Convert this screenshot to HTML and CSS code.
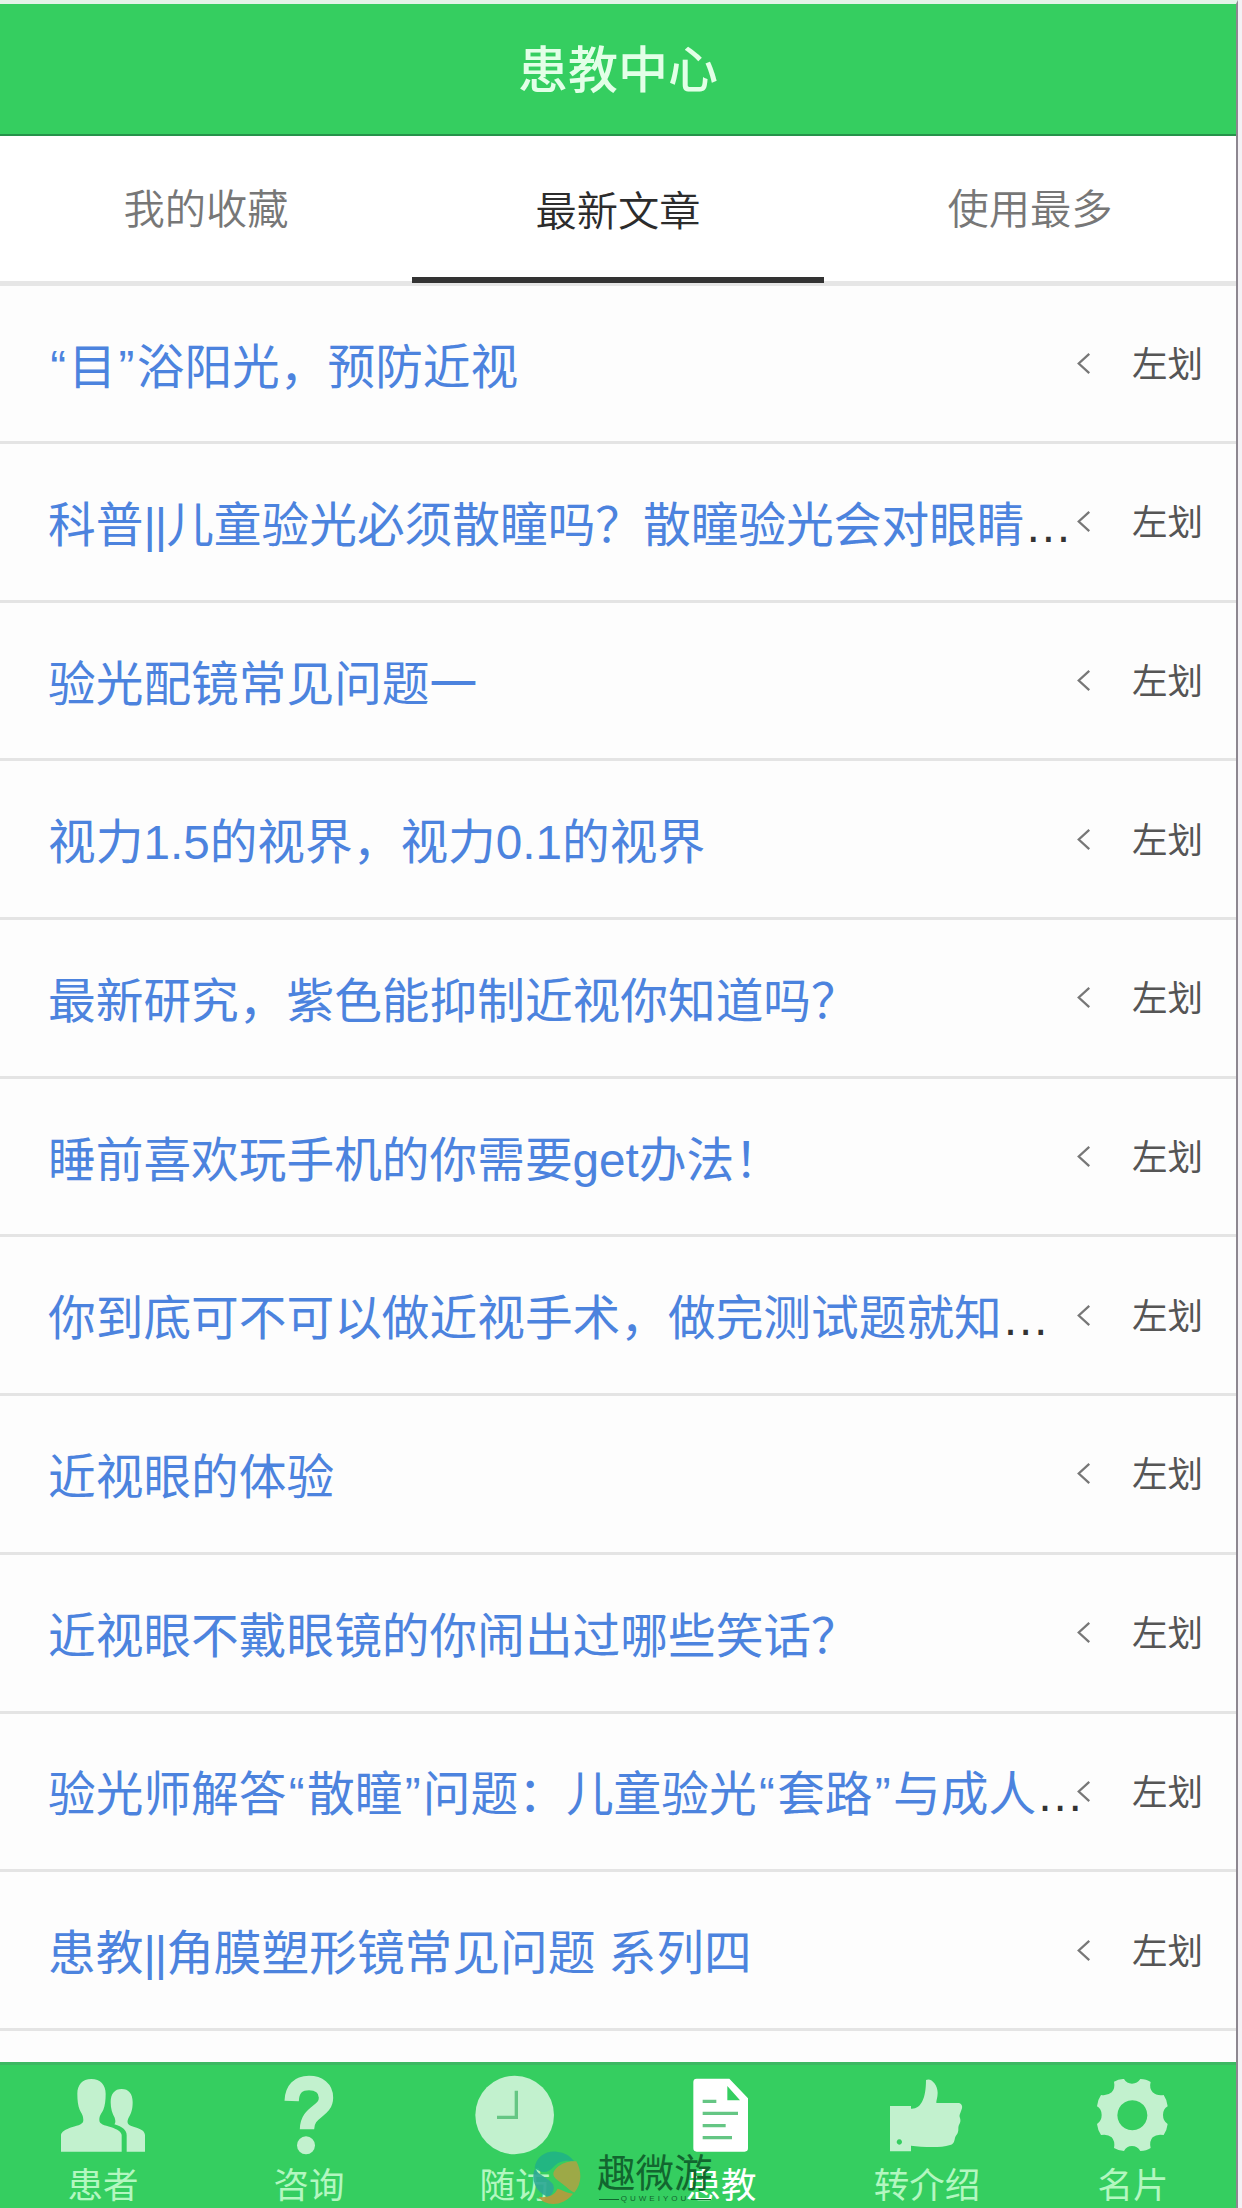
FILE: index.html
```html
<!DOCTYPE html>
<html lang="zh-CN">
<head>
<meta charset="utf-8">
<title>患教中心</title>
<link rel="stylesheet" href="styles.css">
</head>
<body>
<div class="app">
  <header class="header"><h1 class="title">患教中心</h1></header>
  <nav class="tabs">
    <a class="tab">我的收藏</a>
    <a class="tab tab-active">最新文章</a>
    <a class="tab">使用最多</a>
  </nav>
  <ul class="list">
    <li class="row"><span class="name"><span class="q">“</span>目<span class="q">”</span>浴阳光，预防近视</span><svg class="chev" viewBox="0 0 16 24"><path d="M14 1L2 12l12 11"/></svg><span class="hint">左划</span></li>
    <li class="row"><span class="name">科普<span class="bars">||</span>儿童验光必须散瞳吗？散瞳验光会对眼睛<span class="more">…</span></span><svg class="chev" viewBox="0 0 16 24"><path d="M14 1L2 12l12 11"/></svg><span class="hint">左划</span></li>
    <li class="row"><span class="name">验光配镜常见问题一</span><svg class="chev" viewBox="0 0 16 24"><path d="M14 1L2 12l12 11"/></svg><span class="hint">左划</span></li>
    <li class="row"><span class="name">视力1.5的视界，视力0.1的视界</span><svg class="chev" viewBox="0 0 16 24"><path d="M14 1L2 12l12 11"/></svg><span class="hint">左划</span></li>
    <li class="row"><span class="name">最新研究，紫色能抑制近视你知道吗？</span><svg class="chev" viewBox="0 0 16 24"><path d="M14 1L2 12l12 11"/></svg><span class="hint">左划</span></li>
    <li class="row"><span class="name">睡前喜欢玩手机的你需要get办法！</span><svg class="chev" viewBox="0 0 16 24"><path d="M14 1L2 12l12 11"/></svg><span class="hint">左划</span></li>
    <li class="row"><span class="name">你到底可不可以做近视手术，做完测试题就知<span class="more">…</span></span><svg class="chev" viewBox="0 0 16 24"><path d="M14 1L2 12l12 11"/></svg><span class="hint">左划</span></li>
    <li class="row"><span class="name">近视眼的体验</span><svg class="chev" viewBox="0 0 16 24"><path d="M14 1L2 12l12 11"/></svg><span class="hint">左划</span></li>
    <li class="row"><span class="name">近视眼不戴眼镜的你闹出过哪些笑话？</span><svg class="chev" viewBox="0 0 16 24"><path d="M14 1L2 12l12 11"/></svg><span class="hint">左划</span></li>
    <li class="row"><span class="name">验光师解答<span class="q">“</span>散瞳<span class="q">”</span>问题：儿童验光<span class="q">“</span>套路<span class="q">”</span>与成人<span class="more">…</span></span><svg class="chev" viewBox="0 0 16 24"><path d="M14 1L2 12l12 11"/></svg><span class="hint">左划</span></li>
    <li class="row"><span class="name">患教<span class="bars">||</span>角膜塑形镜常见问题 系列四</span><svg class="chev" viewBox="0 0 16 24"><path d="M14 1L2 12l12 11"/></svg><span class="hint">左划</span></li>
  </ul>
  <footer class="bar">
    <a class="item">
      <svg class="icon" viewBox="174 105 270 246"><path d="M183 335v-49c0-10 14-18 32-24 22-7 35-9 35-22 0-14-5-19-11-31-5-12-7-28-7-48 0-26 15-44 42-44s43 18 43 44c0 20-2 36-7 48-6 12-12 17-12 31 0 13 14 15 36 22 18 6 31 14 31 24v49z"/><path d="M380 335v-49c0-16-12-25-37-33 4-4 4-10 1-20-7-11-12-27-12-46 0-26 12-40 33-40s33 14 33 40c0 22-5 34-11 44-4 8-5 12-4 17 2 8 14 11 27 15 16 5 25 12 25 23v49z"/></svg>
      <span>患者</span>
    </a>
    <a class="item">
      <svg class="icon" viewBox="792 105 270 246"><path class="mark" d="M875 183c1-36 20-54 52-54 30 0 51 16 51 44 0 44-57 39-57 95"/><circle cx="918" cy="316" r="27"/></svg>
      <span>咨询</span>
    </a>
    <a class="item">
      <svg class="icon" viewBox="151 105 270 246"><circle cx="285" cy="225" r="118"/><path class="cut" d="M290 152v80h-58"/></svg>
      <span>随访</span>
    </a>
    <a class="item item-active">
      <svg class="icon" viewBox="770 105 270 246"><path fill-rule="evenodd" d="M832 116h98l56 59v150q0 10-10 10H832q-10 0-10-10V126q0-10 10-10zM924 138v43h38z"/><path class="cut" d="M850 184h41M850 220h106M850 257h69M850 293h88"/></svg>
      <span>患教</span>
    </a>
    <a class="item">
      <svg class="icon" viewBox="183 105 270 246"><path fill-rule="evenodd" d="M207 198h63v8c30 2 45-31 45-86 15-8 35 14 35 38 0 15-5 25-4 31h65c10 0 14 8 12 16l-5 14c-3 7-3 10-1 15 3 8 1 14-4 23-2 6 0 12-2 19-2 8-7 11-9 17-2 12-5 20-15 22-30 10-85 6-117 2v17h-63zM235 298a8 8 0 1 0 .1 0z"/></svg>
      <span>转介绍</span>
    </a>
    <a class="item">
      <svg class="icon" viewBox="801 105 270 246"><path fill-rule="evenodd" d="M879 125q14-9 30-8 8 14 24 14t25-14q18 0 31 9-5 18 6 31 12 11 33 8 10 14 12 34-14 8-14 26t14 27q-2 18-12 33-21-4-33 7-11 12-6 32-13 9-31 9-9-15-25-15t-24 15q-17-1-30-9 4-20-7-32-12-11-32-7-10-15-12-33 14-9 14-27t-14-26q2-20 12-34 20 3 32-8 11-12 7-32zM934 181a45 45 0 1 0 .1 0z"/></svg>
      <span>名片</span>
    </a>
    <div class="watermark">
      <svg class="wm-logo" viewBox="335 332 154 164">
        <path d="M346 385c4-34 34-52 66-49 25 2 42 13 53 29-27-5-48 0-63 18-15 17-35 20-56 2z" fill="#20b486"/>
        <path d="M346 388c14 18 38 26 53 43 9 12 5 27-8 42-30-5-60-42-45-85z" fill="#2fa996"/>
        <path d="M472 365c17 32 17 68-6 94-14-4-30-23-50-36-18-12-17-26-4-38 18-16 36-22 60-20z" fill="#a9a545"/>
        <path d="M462 463c-23 30-60 38-87 25-8-4-12-9-17-15 29 2 48-4 57-25 14 2 24 13 47 15z" fill="#b99a3c"/>
      </svg>
      <div class="wm-text"><span class="wm-name">趣微游</span><span class="wm-sub">QUWEIYOU</span></div>
    </div>
  </footer>
</div>
</body>
</html>
```
FILE: styles.css
```css
* { box-sizing: border-box; }
body {
  margin: 0;
  background: #f4f1f5;
  font-family: "Liberation Sans", "Noto Sans CJK SC", sans-serif;
}
.app {
  width: 1238px;
  height: 2208px;
  display: flex;
  flex-direction: column;
  background: #fdfdfd;
  border-right: 2px solid #8d8790;
  border-top: 4px solid #e3f3e8;
  overflow: hidden;
}
.header {
  height: 132px;
  flex: none;
  display: flex;
  align-items: center;
  justify-content: center;
  background: #35ce60;
  border-bottom: 2px solid #26924a;
}
.title {
  margin: 0;
  padding-bottom: 7px;
  font-size: 50px;
  font-weight: 500;
  line-height: 70px;
  color: #e2ffe7;
  font-family: "Noto Sans CJK SC", sans-serif;
}
.tabs {
  height: 150px;
  flex: none;
  display: flex;
  background: #fff;
  border-bottom: 5px solid #e6e6e6;
}
.tab {
  flex: 1;
  height: 147px;
  padding-top: 40px;
  line-height: 60px;
  font-size: 41.3px;
  font-weight: 350;
  text-align: center;
  color: #777;
  font-family: "Noto Sans CJK SC", sans-serif;
}
.tab-active {
  padding-top: 42px;
  color: #2c2c2c;
  border-bottom: 6px solid #333;
}
.list {
  margin: 0;
  padding: 0;
  list-style: none;
  flex: 1;
}
.row {
  height: 158.7px;
  display: flex;
  align-items: center;
  padding: 0 33px 0 48px;
  border-bottom: 3px solid #e4e4e4;
}
.row:first-child { height: 158px; }
.name {
  width: 1029px;
  flex: none;
  padding-top: 8px;
  font-size: 47.7px;
  line-height: 70px;
  white-space: nowrap;
  color: #4c83de;
}
.q {
  display: inline-block;
  width: 0.43em;
  text-align: center;
}
.bars { letter-spacing: -1px; }
.more { color: #333; }
.chev {
  width: 14px;
  height: 23px;
  flex: none;
  fill: none;
  stroke: #777;
  stroke-width: 2.6;
}
.hint {
  margin-left: auto;
  padding-top: 3px;
  font-size: 35.5px;
  line-height: 50px;
  color: #555;
}
.bar {
  position: relative;
  height: 146px;
  flex: none;
  display: flex;
  background: #35ce60;
  border-top: 3px solid #3cb862;
}
.item {
  flex: 1;
  display: flex;
  flex-direction: column;
  align-items: center;
  padding-top: 10px;
  font-size: 35.5px;
  line-height: 58px;
  color: #b3f7c0;
}
.item-active { color: #fff; }
.icon {
  width: 90px;
  height: 82px;
  flex: none;
  fill: #c2f1ce;
}
.item-active .icon { fill: #fff; }
.cut {
  fill: none;
  stroke: #65c684;
  stroke-width: 10;
}
.mark {
  fill: none;
  stroke: #c2f1ce;
  stroke-width: 43;
}
.watermark {
  position: absolute;
  left: 531px;
  top: 85px;
  display: flex;
  gap: 15px;
}
.wm-logo {
  width: 51px;
  height: 55px;
  opacity: 0.9;
}
.wm-text {
  display: flex;
  flex-direction: column;
  width: 116px;
  padding-top: 4px;
  color: #12662f;
}
.wm-name {
  font-size: 38.5px;
  line-height: 40px;
  white-space: nowrap;
}
.wm-sub {
  display: flex;
  align-items: center;
  gap: 2px;
  padding: 0 2px;
  font-size: 8px;
  line-height: 10px;
  letter-spacing: 3px;
}
.wm-sub::before,
.wm-sub::after {
  content: "";
  flex: 1;
  height: 1px;
  background: #12662f;
}
```
